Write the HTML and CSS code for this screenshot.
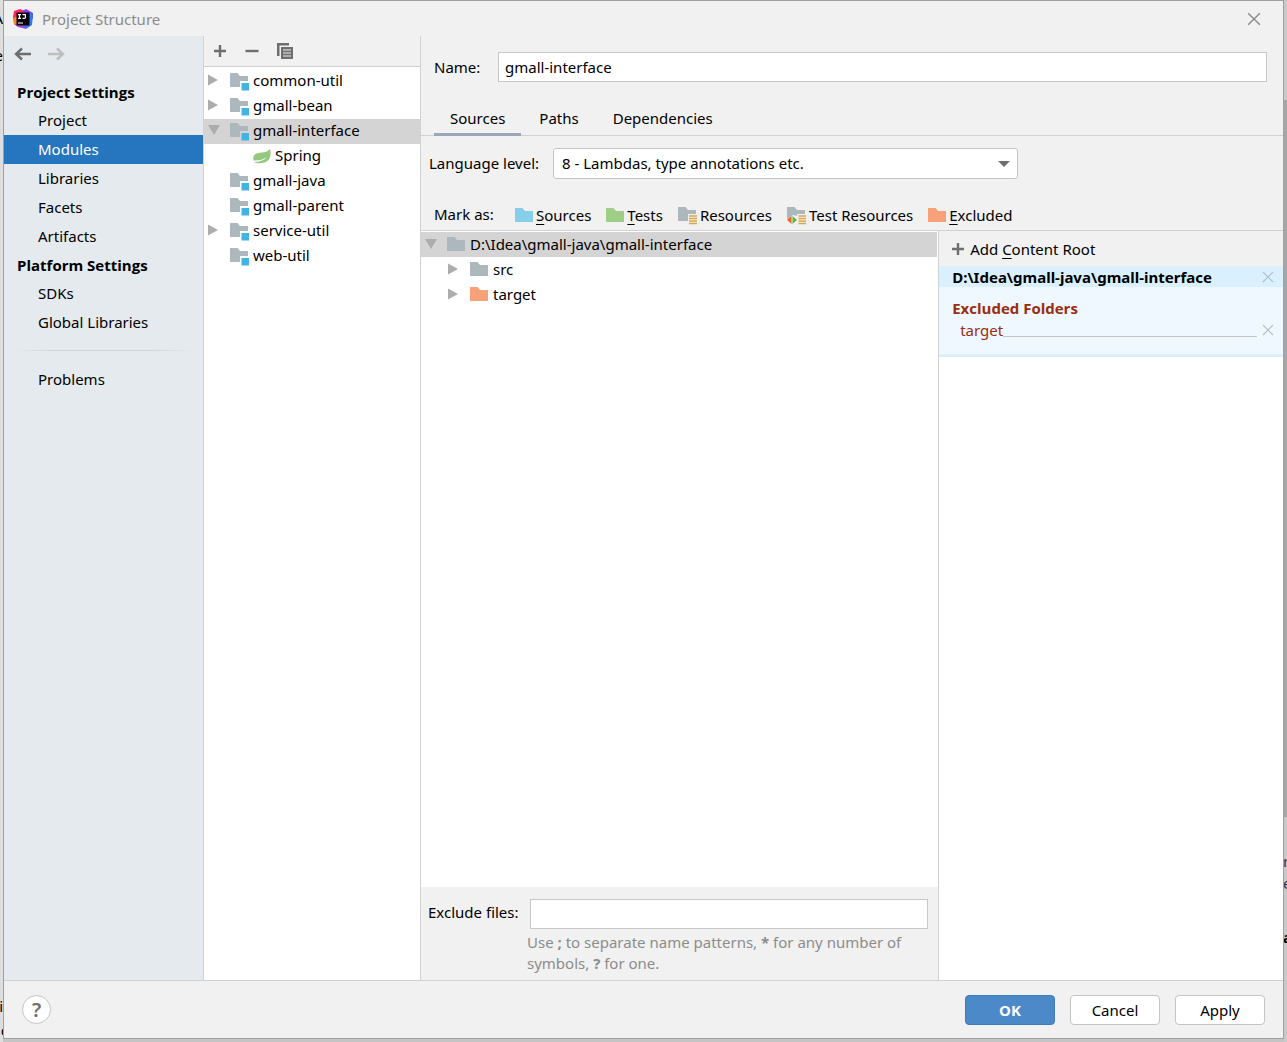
FILE: index.html
```html
<!DOCTYPE html>
<html lang="en">
<head>
<meta charset="utf-8">
<title>Project Structure</title>
<link rel="stylesheet" href="styles.css">
</head>
<body>
<svg class="defs" aria-hidden="true">
  <symbol id="folder" viewBox="0 0 18 14"><path d="M0 0H7.5L10 3H18V14H0Z"/></symbol>
  <symbol id="module" viewBox="0 0 20 18">
    <path fill="#adb7be" d="M0 0H7.5L10 3H18V8H10V14H0Z"/>
    <path fill="#43b3e2" d="M11.500 10H19V17.500H11.500Z"/>
  </symbol>
  <symbol id="right" viewBox="0 0 10 12"><path fill="#adadad" d="M0 0.500L10 6L0 11.500Z"/></symbol>
  <symbol id="down" viewBox="0 0 12 10"><path fill="#adadad" d="M0 0H12L6 10Z"/></symbol>
  <symbol id="plus" viewBox="0 0 14 14"><path stroke="#6e6e6e" stroke-width="2.400" d="M7 1V13M1 7H13"/></symbol>
  <symbol id="cross" viewBox="0 0 12 12"><path fill="none" stroke="currentColor" stroke-width="1.200" d="M1 1L11 11M11 1L1 11"/></symbol>
</svg>

<div class="behind behind-left" aria-hidden="true"><span class="l1">A</span><span class="l2">e</span><span class="l3">i</span><span class="l4">c</span></div>
<div class="behind behind-right" aria-hidden="true"><span class="r1">n</span><span class="r2">e</span><span class="r3">a</span></div>

<main class="dialog">
  <header class="titlebar">
    <svg class="logo" width="20" height="20" viewBox="0 0 20 20">
      <path fill="#fc2b5f" d="M1 2L7 0L12 2L8 12L1 14L0 8Z"/>
      <path fill="#f8842c" d="M0 9L5 7V17L1 15Z"/>
      <path fill="#8a3ff0" d="M9 2L13 0L20 4V10L12 8Z"/>
      <path fill="#2f7df6" d="M16 4L20 5L19 16L13 20L8 16Z"/>
      <path fill="#a548d8" d="M1 15L10 15L13 20L5 18Z"/>
      <rect x="3.500" y="3.500" width="13" height="13" fill="#0a0508"/>
      <path fill="none" stroke="#fff" stroke-width="1.200" d="M5 5.600H8M6.500 5.600V9.400M5 9.400H8M9.500 5.600H12.400V8.400Q12.400 9.600 9.500 9.400"/>
      <path stroke="#fff" d="M5 14H10"/>
    </svg>
    <h1>Project Structure</h1>
    <button class="close" aria-label="Close"><svg width="14" height="14"><use href="#cross"/></svg></button>
  </header>

  <div class="content">
    <nav class="sidebar">
      <div class="history">
        <button aria-label="Back"><svg width="18" height="14" viewBox="0 0 18 14"><path fill="none" stroke="#6e6e6e" stroke-width="2.400" d="M17 7H2M8 1.500L2 7L8 12.500"/></svg></button>
        <button aria-label="Forward"><svg width="18" height="14" viewBox="0 0 18 14"><path fill="none" stroke="#bdbebf" stroke-width="2.400" d="M1 7H16M10 1.500L16 7L10 12.500"/></svg></button>
      </div>
      <h2>Project Settings</h2>
      <a href="#">Project</a>
      <a href="#" class="active">Modules</a>
      <a href="#">Libraries</a>
      <a href="#">Facets</a>
      <a href="#">Artifacts</a>
      <h2>Platform Settings</h2>
      <a href="#">SDKs</a>
      <a href="#">Global Libraries</a>
      <hr>
      <a href="#">Problems</a>
    </nav>

    <section class="modules">
      <div class="toolbar">
        <button aria-label="Add"><svg width="14" height="14"><use href="#plus"/></svg></button>
        <button aria-label="Remove"><svg width="14" height="14" viewBox="0 0 14 14"><path stroke="#6e6e6e" stroke-width="2.400" d="M0.500 7H13.500"/></svg></button>
        <button aria-label="Copy"><svg width="16" height="16" viewBox="0 0 16 16"><path fill="#6e6e6e" d="M0 0H12V2.500H2.500V13H0Z"/><path fill="#6e6e6e" fill-rule="evenodd" d="M4 4H16V16H4ZM6 6.500V7.500H14V6.500ZM6 9.500V10.500H14V9.500ZM6 12.500V13.500H14V12.500Z"/></svg></button>
      </div>
      <ul class="tree">
        <li><svg class="twist"><use href="#right"/></svg><svg class="mod"><use href="#module"/></svg>common-util</li>
        <li><svg class="twist"><use href="#right"/></svg><svg class="mod"><use href="#module"/></svg>gmall-bean</li>
        <li class="selected"><svg class="twist open"><use href="#down"/></svg><svg class="mod"><use href="#module"/></svg>gmall-interface</li>
        <li class="child"><svg class="leaf" viewBox="0 0 18 15"><path fill="#93c97c" d="M17 0C19 8 16 14 8 14Q4 15 1 13Q10 13 14 8Q8 12 0.500 11.500C-1 5 4 4 9 3.600Q14 3.500 17 0Z"/></svg>Spring</li>
        <li><span class="twist"></span><svg class="mod"><use href="#module"/></svg>gmall-java</li>
        <li><span class="twist"></span><svg class="mod"><use href="#module"/></svg>gmall-parent</li>
        <li><svg class="twist"><use href="#right"/></svg><svg class="mod"><use href="#module"/></svg>service-util</li>
        <li><span class="twist"></span><svg class="mod"><use href="#module"/></svg>web-util</li>
      </ul>
    </section>

    <section class="editor">
      <div class="name-row">
        <label for="name">Name:</label>
        <input id="name" type="text" value="gmall-interface">
      </div>
      <div class="tabs" role="tablist">
        <button role="tab" aria-selected="true">Sources</button>
        <button role="tab" aria-selected="false">Paths</button>
        <button role="tab" aria-selected="false">Dependencies</button>
      </div>
      <div class="level-row">
        <label for="level">Language level:</label>
        <div class="select">
          <select id="level"><option>8 - Lambdas, type annotations etc.</option></select>
          <svg width="12" height="6" viewBox="0 0 12 6"><path fill="#6e6e6e" d="M0 0H12L6 6Z"/></svg>
        </div>
      </div>
      <div class="mark-row">
        <span class="mark-label">Mark as:</span>
        <button><svg class="folder blue"><use href="#folder"/></svg><span><u>S</u>ources</span></button>
        <button><svg class="folder green"><use href="#folder"/></svg><span><u>T</u>ests</span></button>
        <button><svg class="mark" viewBox="0 0 20 18"><path fill="#adb7be" d="M0 0H7.500L10 3H18V7H10V14H0Z"/><path stroke="#dba64b" stroke-width="1.500" d="M11 9H19M11 11.500H19M11 14H19M11 16.500H19"/></svg>Resources</button>
        <button><svg class="mark" viewBox="0 0 20 18"><path fill="#adb7be" d="M0 0H7.500L10 3H18V7H10V9L6 8L1 12H0Z"/><path fill="#f26522" d="M4.500 9V17L0 13Z"/><path fill="#62b543" d="M5.500 9V17L10 13Z"/><path stroke="#dba64b" stroke-width="1.500" d="M11.500 9H19M11.500 11.500H19M11.500 14H19M11.500 16.500H19"/></svg>Test Resources</button>
        <button><svg class="folder orange"><use href="#folder"/></svg><span><u>E</u>xcluded</span></button>
      </div>

      <div class="roots">
        <div class="files">
          <ul class="tree">
            <li class="selected"><svg class="twist open"><use href="#down"/></svg><svg class="folder gray"><use href="#folder"/></svg>D:\Idea\gmall-java\gmall-interface</li>
            <li class="nested"><svg class="twist"><use href="#right"/></svg><svg class="folder gray"><use href="#folder"/></svg>src</li>
            <li class="nested"><svg class="twist"><use href="#right"/></svg><svg class="folder orange"><use href="#folder"/></svg>target</li>
          </ul>
          <div class="exclude">
            <label for="exclude">Exclude files:</label>
            <input id="exclude" type="text">
            <p>Use <b>;</b> to separate name patterns, <b>*</b> for any number of symbols, <b>?</b> for one.</p>
          </div>
        </div>
        <aside class="content-roots">
          <button class="add-root"><svg width="14" height="14"><use href="#plus"/></svg><span>Add <u>C</u>ontent Root</span></button>
          <div class="root-card">
            <div class="root-path"><strong>D:\Idea\gmall-java\gmall-interface</strong><button aria-label="Remove root"><svg width="12" height="12"><use href="#cross"/></svg></button></div>
            <h3>Excluded Folders</h3>
            <div class="root-folder"><span>target</span><i></i><button aria-label="Remove target"><svg width="12" height="12"><use href="#cross"/></svg></button></div>
          </div>
        </aside>
      </div>
    </section>
  </div>

  <footer class="footer">
    <button class="help" aria-label="Help">?</button>
    <button class="btn primary">OK</button>
    <button class="btn">Cancel</button>
    <button class="btn">Apply</button>
  </footer>
</main>
</body>
</html>
```
FILE: styles.css
```css
* { box-sizing: border-box; }

body {
  margin: 0;
  padding: 0 3px 3px;
  min-height: 100vh;
  display: flex;
  background: #c4c4c4;
  color: #000;
  font: 15px/20px "Noto Sans", "Open Sans", sans-serif;
}

h1, h2, h3, p, ul { margin: 0; padding: 0; font-size: inherit; }
h2, h3 { font-family: "Open Sans", "Noto Sans", sans-serif; }
ul { list-style: none; }
svg { flex: none; display: block; }
button { margin: 0; padding: 0; border: 0; background: none; font: inherit; color: inherit; }
input, select { font: inherit; color: inherit; }
a { color: inherit; text-decoration: none; }
u { text-underline-offset: 3px; }
.defs { position: absolute; width: 0; height: 0; }

/* Slivers of the editor window that show around the dialog */
.behind { position: absolute; top: 0; bottom: 0; width: 3px; overflow: hidden; background: #dedede; }
.behind-left { left: 0; }
.behind-right { right: 0; background: linear-gradient(#c9c9c9 100px, #a6a6a6 100px, #a6a6a6 817px, #c9c9c9 817px); }
.behind span { position: absolute; right: 0; }
.behind-right span { right: auto; left: -1px; color: #1d3360; }
.behind .l1 { top: 8px; }
.behind .l2 { top: 45px; }
.behind .l3 { top: 996px; }
.behind .l4 { top: 1020px; right: -5px; }
.behind .r1 { top: 851px; }
.behind .r2 { top: 873px; }
.behind .r3 { top: 927px; color: #000; font-weight: 700; }

.dialog {
  position: relative;
  flex: 1;
  min-width: 0;
  display: flex;
  flex-direction: column;
  border: 1px solid #a0a0a0;
  background: #f1f1f1;
}

.titlebar { display: flex; align-items: center; height: 35px; padding: 0 22px 0 9px; color: #8c8c8c; }
.titlebar h1 { flex: 1; margin-left: 9px; font-weight: 400; }
.close { color: #8a8a8a; }

.content { flex: 1; display: flex; min-height: 0; border-bottom: 1px solid #d1d1d1; }

.sidebar { width: 200px; flex: none; border-right: 1px solid #d1d1d1; background: #e5eaee; }
.history { display: flex; gap: 15px; height: 42px; padding: 11px 10px 0; }
.history button { height: 14px; }
.sidebar h2 { padding-left: 13px; line-height: 28px; font-weight: 700; }
.sidebar a { display: block; padding-left: 34px; line-height: 29px; }
.sidebar .active { background: #2675bf; color: #fff; }
.sidebar hr { height: 1px; margin: 13px 10px 14px; border: 0; background: linear-gradient(90deg, transparent, #d3d6d9 20%, #d3d6d9 80%, transparent); }

.modules { width: 217px; flex: none; border-right: 1px solid #d1d1d1; background: #fff; }
.toolbar { display: flex; align-items: center; gap: 18px; height: 31px; padding-left: 9px; border-bottom: 1px solid #d1d1d1; background: #f1f1f1; }

.tree { padding-top: 2px; }
.tree li { display: flex; align-items: center; height: 25px; padding: 0 0 3px 4px; white-space: nowrap; }
.tree .selected { background: #d4d4d4; }
.tree .child { padding-left: 49px; }
.twist { width: 10px; height: 12px; margin-right: 12px; flex: none; }
.twist.open { width: 12px; height: 10px; margin-right: 10px; }
.mod { width: 20px; height: 18px; margin: 4px 3px 0 0; }
.leaf { width: 18px; height: 15px; margin: 2px 4px 0 0; }
.folder { width: 18px; height: 14px; margin-right: 4px; }
.gray { fill: #adb7be; }
.blue { fill: #87cfe8; }
.green { fill: #9fcf86; }
.orange { fill: #f6a178; }

.editor { flex: 1; min-width: 0; display: flex; flex-direction: column; }
.name-row { display: flex; align-items: center; padding: 16px 16px 0 13px; }
.name-row label { width: 64px; }
.name-row input { flex: 1; min-width: 0; height: 30px; padding: 0 6px; border: 1px solid #c8c8c8; background: #fff; }

.tabs { display: flex; gap: 2px; height: 54px; padding: 20px 0 0 13px; border-bottom: 1px solid #d1d1d1; }
.tabs button { height: 34px; padding: 0 16px; border-bottom: 3px solid transparent; }
.tabs [aria-selected="true"] { border-color: #9ba7b8; }

.level-row { display: flex; align-items: center; gap: 10px; padding: 12px 8px 0; }
.level-row label { width: 114px; padding-bottom: 2px; white-space: nowrap; }
.select { position: relative; width: 465px; }
.select select { appearance: none; width: 100%; height: 31px; padding: 0 8px 2px; border: 1px solid #c4c4c4; border-radius: 3px; background: #fff; }
.select svg { position: absolute; right: 8px; top: 13px; pointer-events: none; }

.mark-row { display: flex; align-items: center; gap: 15px; height: 52px; padding: 21px 0 0 13px; border-bottom: 1px solid #d1d1d1; white-space: nowrap; }
.mark-label { width: 66px; padding-bottom: 3px; }
.mark-row button { display: flex; align-items: center; }
.mark-row .folder { margin-right: 3px; }
.mark { width: 20px; height: 18px; margin: 2px 2px 0 0; }

.roots { flex: 1; display: flex; min-height: 0; }
.files { flex: 3; min-width: 0; display: flex; flex-direction: column; border-right: 1px solid #d1d1d1; background: #fff; }
.files .tree { flex: 1; padding: 1px 1px 0 0; }
.files .tree li { padding-bottom: 1px; }
.files .folder { margin-right: 5px; }
.files .nested { padding-left: 27px; }
.exclude { display: grid; grid-template-columns: 102px 1fr; align-items: center; height: 93px; padding: 10px 10px 5px 7px; background: #f1f1f1; }
.exclude label { padding-bottom: 3px; }
.exclude input { min-width: 0; height: 30px; border: 1px solid #c8c8c8; background: #fff; }
.exclude p { grid-column: 2; margin-left: -3px; line-height: 21px; color: #8c8c8c; }

.content-roots { flex: 2; min-width: 0; background: #fff; }
.add-root { display: flex; align-items: center; gap: 5px; width: 100%; height: 35px; padding-left: 12px; background: #f1f1f1; }
.root-card { height: 91px; border-bottom: 3px solid #dbf0ff; background: #eff8ff; }
.root-path { display: flex; align-items: center; justify-content: space-between; height: 21px; padding: 0 9px 0 13px; background: #dbf0ff; }
.root-card button { color: #b4c0c9; }
.root-card h3 { margin-top: 10px; padding-left: 13px; line-height: 22px; color: #992e0f; }
.root-folder { display: flex; align-items: center; height: 22px; padding: 0 9px 0 21px; color: #992e0f; }
.root-folder i { flex: 1; height: 14px; margin-right: 5px; border-bottom: 1px solid #c4c4c4; }

.footer { display: flex; align-items: center; gap: 15px; height: 57px; padding: 0 18px; }
.help { width: 29px; height: 29px; margin-right: auto; border: 1px solid #c4c4c4; border-radius: 50%; background: #fff; color: #6e6e6e; font-size: 20px; font-weight: 600; line-height: 26px; }
.btn { width: 90px; height: 30px; border: 1px solid #c4c4c4; border-radius: 4px; background: #fff; }
.primary { border-color: #3e7cbc; background: #4b89c9; color: #fff; font-weight: 700; }

@media (min-width: 1100px) {
  .files { flex: 0 0 calc(60% + 1px); }
}
```
